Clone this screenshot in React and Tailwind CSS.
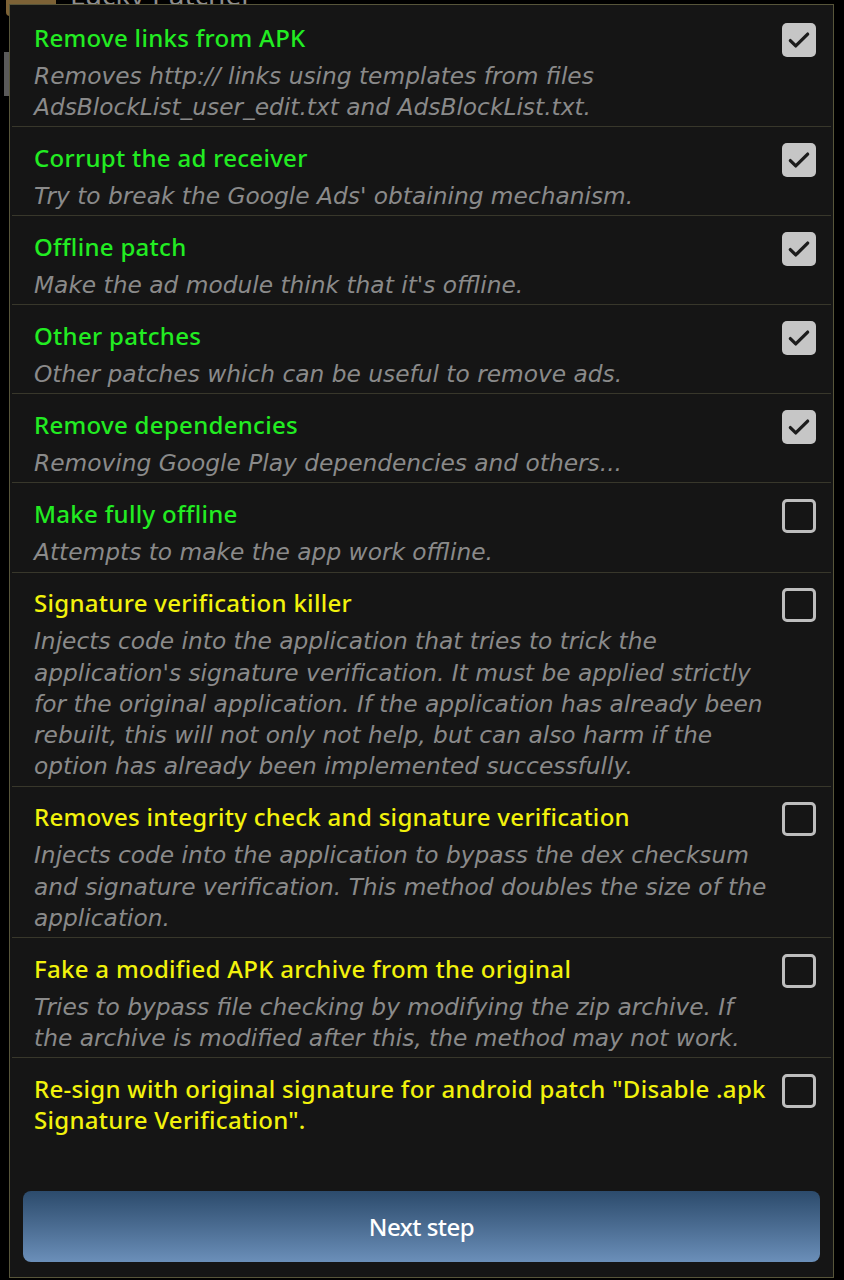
import React from "react";

const rows = [
  { t: "Remove links from APK", d: "Removes http:// links using templates from files AdsBlockList_user_edit.txt and AdsBlockList.txt.", c: "g", on: true },
  { t: "Corrupt the ad receiver", d: "Try to break the Google Ads' obtaining mechanism.", c: "g", on: true },
  { t: "Offline patch", d: "Make the ad module think that it's offline.", c: "g", on: true },
  { t: "Other patches", d: "Other patches which can be useful to remove ads.", c: "g", on: true },
  { t: "Remove dependencies", d: "Removing Google Play dependencies and others...", c: "g", on: true },
  { t: "Make fully offline", d: "Attempts to make the app work offline.", c: "g", on: false },
  { t: "Signature verification killer", d: "Injects code into the application that tries to trick the application's signature verification. It must be applied strictly for the original application. If the application has already been rebuilt, this will not only not help, but can also harm if the option has already been implemented successfully.", c: "y", on: false },
  { t: "Removes integrity check and signature verification", d: "Injects code into the application to bypass the dex checksum and signature verification. This method doubles the size of the application.", c: "y", on: false },
  { t: "Fake a modified APK archive from the original", d: "Tries to bypass file checking by modifying the zip archive. If the archive is modified after this, the method may not work.", c: "y", on: false },
  { t: "Re-sign with original signature for android patch \"Disable .apk Signature Verification\".", d: null, c: "y", on: false },
];

function Box({ on }) {
  if (on) {
    return (
      <div className="w-[34px] h-[34px] rounded-[5px] bg-[#c6c6c6] flex items-center justify-center shrink-0">
        <svg width="26" height="26" viewBox="0 0 24 24" fill="none">
          <path d="M4 12.5l5 5L20 6.5" stroke="#1c1c1c" strokeWidth="3" strokeLinecap="round" strokeLinejoin="round" />
        </svg>
      </div>
    );
  }
  return <div className="w-[34px] h-[34px] rounded-[5px] border-[3px] border-[#bdbdbd] shrink-0" />;
}

export default function App() {
  return (
    <div className="relative w-[844px] h-[1280px] bg-black overflow-hidden" style={{ fontFamily: '"Noto Sans", "Open Sans", sans-serif' }}>
      <div className="flex items-start gap-[14px] -mt-[22px] pl-[6px]">
        <div className="w-[50px] h-[38px] rounded-[4px] bg-[#7d6236]" />
        <div className="text-[28px] leading-[32px] text-[#8f8f8f]">Lucky Patcher</div>
      </div>
      <div className="absolute left-[4px] top-[52px] w-[5px] h-[44px] bg-[#5a5a5a]" />
      <div className="absolute left-[9px] top-[4px] w-[825px] h-[1274px] bg-[#151515] border border-[#57553a] flex flex-col">
        <div className="pt-[2px] flex flex-col">
          {rows.map((r, i) => (
            <div key={i} className={i < rows.length - 1 ? "mx-[2px] border-b border-[#38372b]" : "mx-[2px]"}>
              <div className="flex items-start pl-[22px] pr-[15px] pb-[4px] pt-[14.8px]">
                <div className="flex-1 min-w-0">
                  <div className={(r.c === "g" ? "text-[#22ec22]" : "text-[#f2f20c]") + " text-[24px] leading-[31px] font-medium tracking-[0.3px]"}>{r.t}</div>
                  {r.d && (
                    <div className="mt-[7px] text-[23.3px] leading-[31.25px] italic text-[#8a8a8a]" style={{ fontFamily: '"DejaVu Sans", sans-serif' }}>{r.d}</div>
                  )}
                </div>
                <div className="ml-[6px] pt-[1px]">
                  <Box on={r.on} />
                </div>
              </div>
            </div>
          ))}
        </div>
        <div className="flex-1" />
        <div className="px-[13px] pb-[15px]">
          <div className="h-[71px] rounded-[8px] bg-gradient-to-b from-[#2c4b6c] to-[#6b8fb9] flex items-center justify-center">
            <span className="text-white text-[24px] font-medium tracking-[-0.5px]">Next step</span>
          </div>
        </div>
      </div>
    </div>
  );
}
